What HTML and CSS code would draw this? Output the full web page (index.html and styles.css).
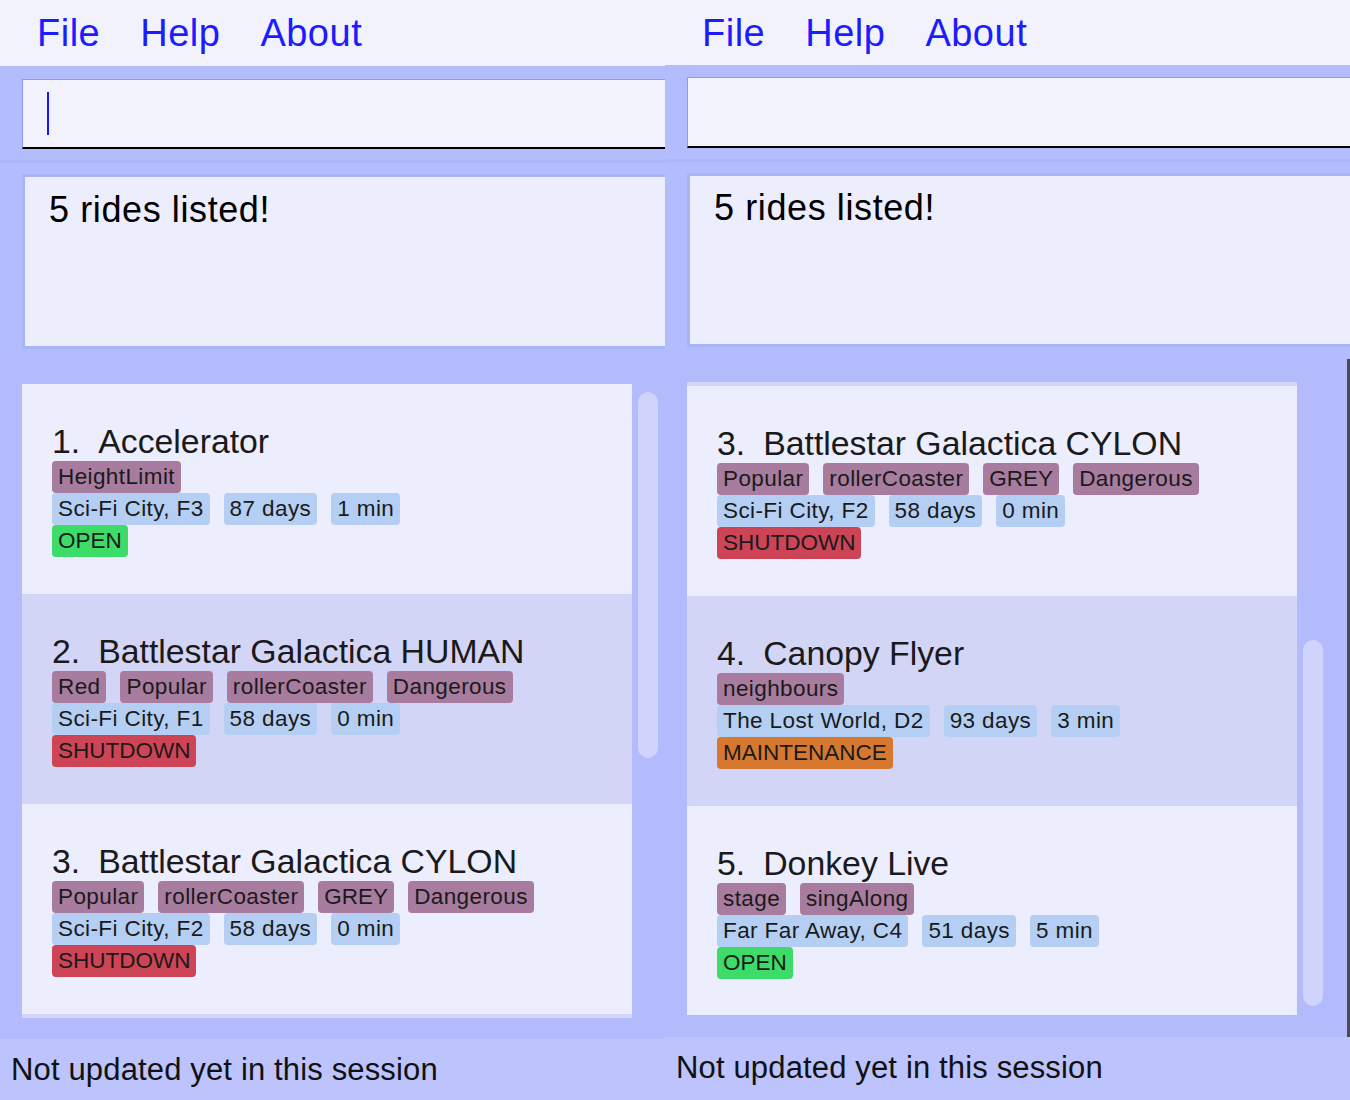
FILE: index.html
```html
<!DOCTYPE html>
<html lang="en">
<head>
<meta charset="utf-8">
<title>Rides</title>
<link rel="stylesheet" href="styles.css">
</head>
<body>
<div class="screen">
  <section class="window win-left">
    <nav class="menubar">
      <span class="menu-item">File</span>
      <span class="menu-item">Help</span>
      <span class="menu-item">About</span>
    </nav>
    <div class="command-area">
      <div class="command-field"><span class="caret"></span></div>
    </div>
    <div class="result-area">
      <div class="result-box">5 rides listed!</div>
    </div>
    <div class="list-area">
      <div class="list-viewport">
        <article class="card odd">
          <div class="card-title"><span class="idx">1.</span><span class="name">Accelerator</span></div>
          <div class="tag-row"><span class="tag label">HeightLimit</span></div>
          <div class="tag-row"><span class="tag info">Sci-Fi City, F3</span><span class="tag info">87 days</span><span class="tag info">1 min</span></div>
          <div class="tag-row"><span class="tag open">OPEN</span></div>
        </article>
        <article class="card even">
          <div class="card-title"><span class="idx">2.</span><span class="name">Battlestar Galactica HUMAN</span></div>
          <div class="tag-row"><span class="tag label">Red</span><span class="tag label">Popular</span><span class="tag label">rollerCoaster</span><span class="tag label">Dangerous</span></div>
          <div class="tag-row"><span class="tag info">Sci-Fi City, F1</span><span class="tag info">58 days</span><span class="tag info">0 min</span></div>
          <div class="tag-row"><span class="tag shutdown">SHUTDOWN</span></div>
        </article>
        <article class="card odd">
          <div class="card-title"><span class="idx">3.</span><span class="name">Battlestar Galactica CYLON</span></div>
          <div class="tag-row"><span class="tag label">Popular</span><span class="tag label">rollerCoaster</span><span class="tag label caps">GREY</span><span class="tag label">Dangerous</span></div>
          <div class="tag-row"><span class="tag info">Sci-Fi City, F2</span><span class="tag info">58 days</span><span class="tag info">0 min</span></div>
          <div class="tag-row"><span class="tag shutdown">SHUTDOWN</span></div>
        </article>
        <div class="card-edge even"></div>
      </div>
      <div class="scroll-track"><div class="scroll-thumb"></div></div>
    </div>
    <footer class="statusbar">Not updated yet in this session</footer>
  </section>

  <section class="window win-right">
    <nav class="menubar">
      <span class="menu-item">File</span>
      <span class="menu-item">Help</span>
      <span class="menu-item">About</span>
    </nav>
    <div class="command-area">
      <div class="command-field"></div>
    </div>
    <div class="result-area">
      <div class="result-box">5 rides listed!</div>
    </div>
    <div class="list-area">
      <div class="list-viewport">
        <div class="card-edge even"></div>
        <article class="card odd">
          <div class="card-title"><span class="idx">3.</span><span class="name">Battlestar Galactica CYLON</span></div>
          <div class="tag-row"><span class="tag label">Popular</span><span class="tag label">rollerCoaster</span><span class="tag label caps">GREY</span><span class="tag label">Dangerous</span></div>
          <div class="tag-row"><span class="tag info">Sci-Fi City, F2</span><span class="tag info">58 days</span><span class="tag info">0 min</span></div>
          <div class="tag-row"><span class="tag shutdown">SHUTDOWN</span></div>
        </article>
        <article class="card even">
          <div class="card-title"><span class="idx">4.</span><span class="name">Canopy Flyer</span></div>
          <div class="tag-row"><span class="tag label">neighbours</span></div>
          <div class="tag-row"><span class="tag info">The Lost World, D2</span><span class="tag info">93 days</span><span class="tag info">3 min</span></div>
          <div class="tag-row"><span class="tag maint">MAINTENANCE</span></div>
        </article>
        <article class="card odd last">
          <div class="card-title"><span class="idx">5.</span><span class="name">Donkey Live</span></div>
          <div class="tag-row"><span class="tag label">stage</span><span class="tag label">singAlong</span></div>
          <div class="tag-row"><span class="tag info">Far Far Away, C4</span><span class="tag info">51 days</span><span class="tag info">5 min</span></div>
          <div class="tag-row"><span class="tag open">OPEN</span></div>
        </article>
      </div>
      <div class="scroll-track"><div class="scroll-thumb"></div></div>
    </div>
    <footer class="statusbar">Not updated yet in this session</footer>
  </section>
</div>
</body>
</html>
```

FILE: styles.css
```css
html, body {
  margin: 0;
  padding: 0;
}

body {
  font-family: "Liberation Sans", Arial, sans-serif;
  background: #b3bcfc;
  color: #1a1a1a;
}

.screen {
  display: flex;
  width: 1350px;
  height: 1100px;
  overflow: hidden;
}

.window {
  display: flex;
  flex-direction: column;
  height: 1100px;
  overflow: hidden;
}

.win-left {
  width: 665px;
  flex: 0 0 665px;
}

.win-right {
  flex: 1 1 auto;
}

/* menu bar */
.menubar {
  display: flex;
  align-items: center;
  height: 66px;
  flex: 0 0 66px;
  padding-left: 17px;
  background: #f2f2fd;
}

.win-right .menubar {
  height: 65px;
  flex-basis: 65px;
}

.menu-item {
  font-size: 38px;
  line-height: 66px;
  padding: 0 20px;
  letter-spacing: 0.5px;
  color: #1c1cff;
}

/* command box */
.command-area {
  flex: 0 0 auto;
  padding: 13px 0 11px 22px;
  background: #b3bcfc;
  border-bottom: 3px solid #adb6fb;
}

.win-right .command-area {
  padding-top: 12px;
}

.command-field {
  display: flex;
  align-items: center;
  height: 67px;
  padding-left: 24px;
  background: #f2f2fd;
  border-top: 1px solid #8b97ff;
  border-left: 1px solid #8b97ff;
  border-bottom: 2px solid #000;
}

.win-right .command-field {
  height: 68px;
}

.caret {
  display: block;
  width: 2px;
  height: 43px;
  background: #1515ff;
}

/* result display */
.result-area {
  flex: 0 0 auto;
  padding: 11px 0 11px 22px;
  background: #b3bcfc;
}

.win-right .result-area {
  padding-top: 11px;
  padding-bottom: 12px;
}

.result-box {
  height: 157px;
  padding: 12px 0 0 24px;
  background: #ecedfd;
  border-top: 3px solid #a9b3fa;
  border-left: 3px solid #a9b3fa;
  border-bottom: 3px solid #a9b3fa;
  font-size: 36px;
  line-height: 41px;
  letter-spacing: 0.6px;
  color: #000;
}

.win-right .result-box {
  padding-top: 11px;
}

/* list */
.list-area {
  flex: 1 1 auto;
  display: flex;
  align-items: flex-start;
  gap: 6px;
  padding: 24px 0 21px 22px;
  background: #b3bbfc;
}

.win-right .list-area {
  padding-top: 23px;
  border-right: 3px solid #4b4b58;
}

.list-viewport {
  display: flex;
  flex-direction: column;
  width: 610px;
  flex: 0 0 610px;
}

.card {
  display: flex;
  flex-direction: column;
  justify-content: center;
  height: 210px;
  padding-left: 30px;
  box-sizing: border-box;
}

.card.last {
  height: 209px;
}

.odd {
  background: #ecedfd;
}

.even {
  background: #d3d5f7;
}

.card-edge {
  height: 4px;
}

.card-title {
  font-size: 33.8px;
  line-height: 40px;
  color: #1a1a1a;
  white-space: nowrap;
}

.idx {
  margin-right: 18px;
}

.tag-row {
  display: flex;
  gap: 14px;
  height: 32px;
}

.tag {
  display: block;
  padding: 0 6px;
  font-size: 22.5px;
  line-height: 32px;
  letter-spacing: 0.4px;
  border-radius: 4px;
  color: #1a1a1a;
  white-space: nowrap;
}

.tag.caps,
.tag.open,
.tag.shutdown,
.tag.maint {
  letter-spacing: 0;
}

.tag.label {
  background: #a87c9f;
}

.tag.info {
  background: #b4cff3;
}

.tag.open {
  background: #3ddc69;
}

.tag.shutdown {
  background: #ce4457;
}

.tag.maint {
  background: #d6782f;
}

/* scrollbar */
.scroll-track {
  display: flex;
  flex-direction: column;
  width: 20px;
  height: 634px;
  box-sizing: border-box;
  padding: 8px 0;
}

.win-right .scroll-track {
  height: 633px;
  justify-content: flex-end;
  padding-bottom: 9px;
}

.scroll-thumb {
  height: 366px;
  border-radius: 10px;
  background: #d0d4fd;
}

/* status bar */
.statusbar {
  flex: 0 0 61px;
  height: 61px;
  padding-left: 11px;
  font-size: 31px;
  line-height: 61px;
  letter-spacing: 0.15px;
  background: #bcc3fd;
  color: #111;
}

.win-right .statusbar {
  flex-basis: 63px;
  height: 63px;
  line-height: 62px;
}
```
